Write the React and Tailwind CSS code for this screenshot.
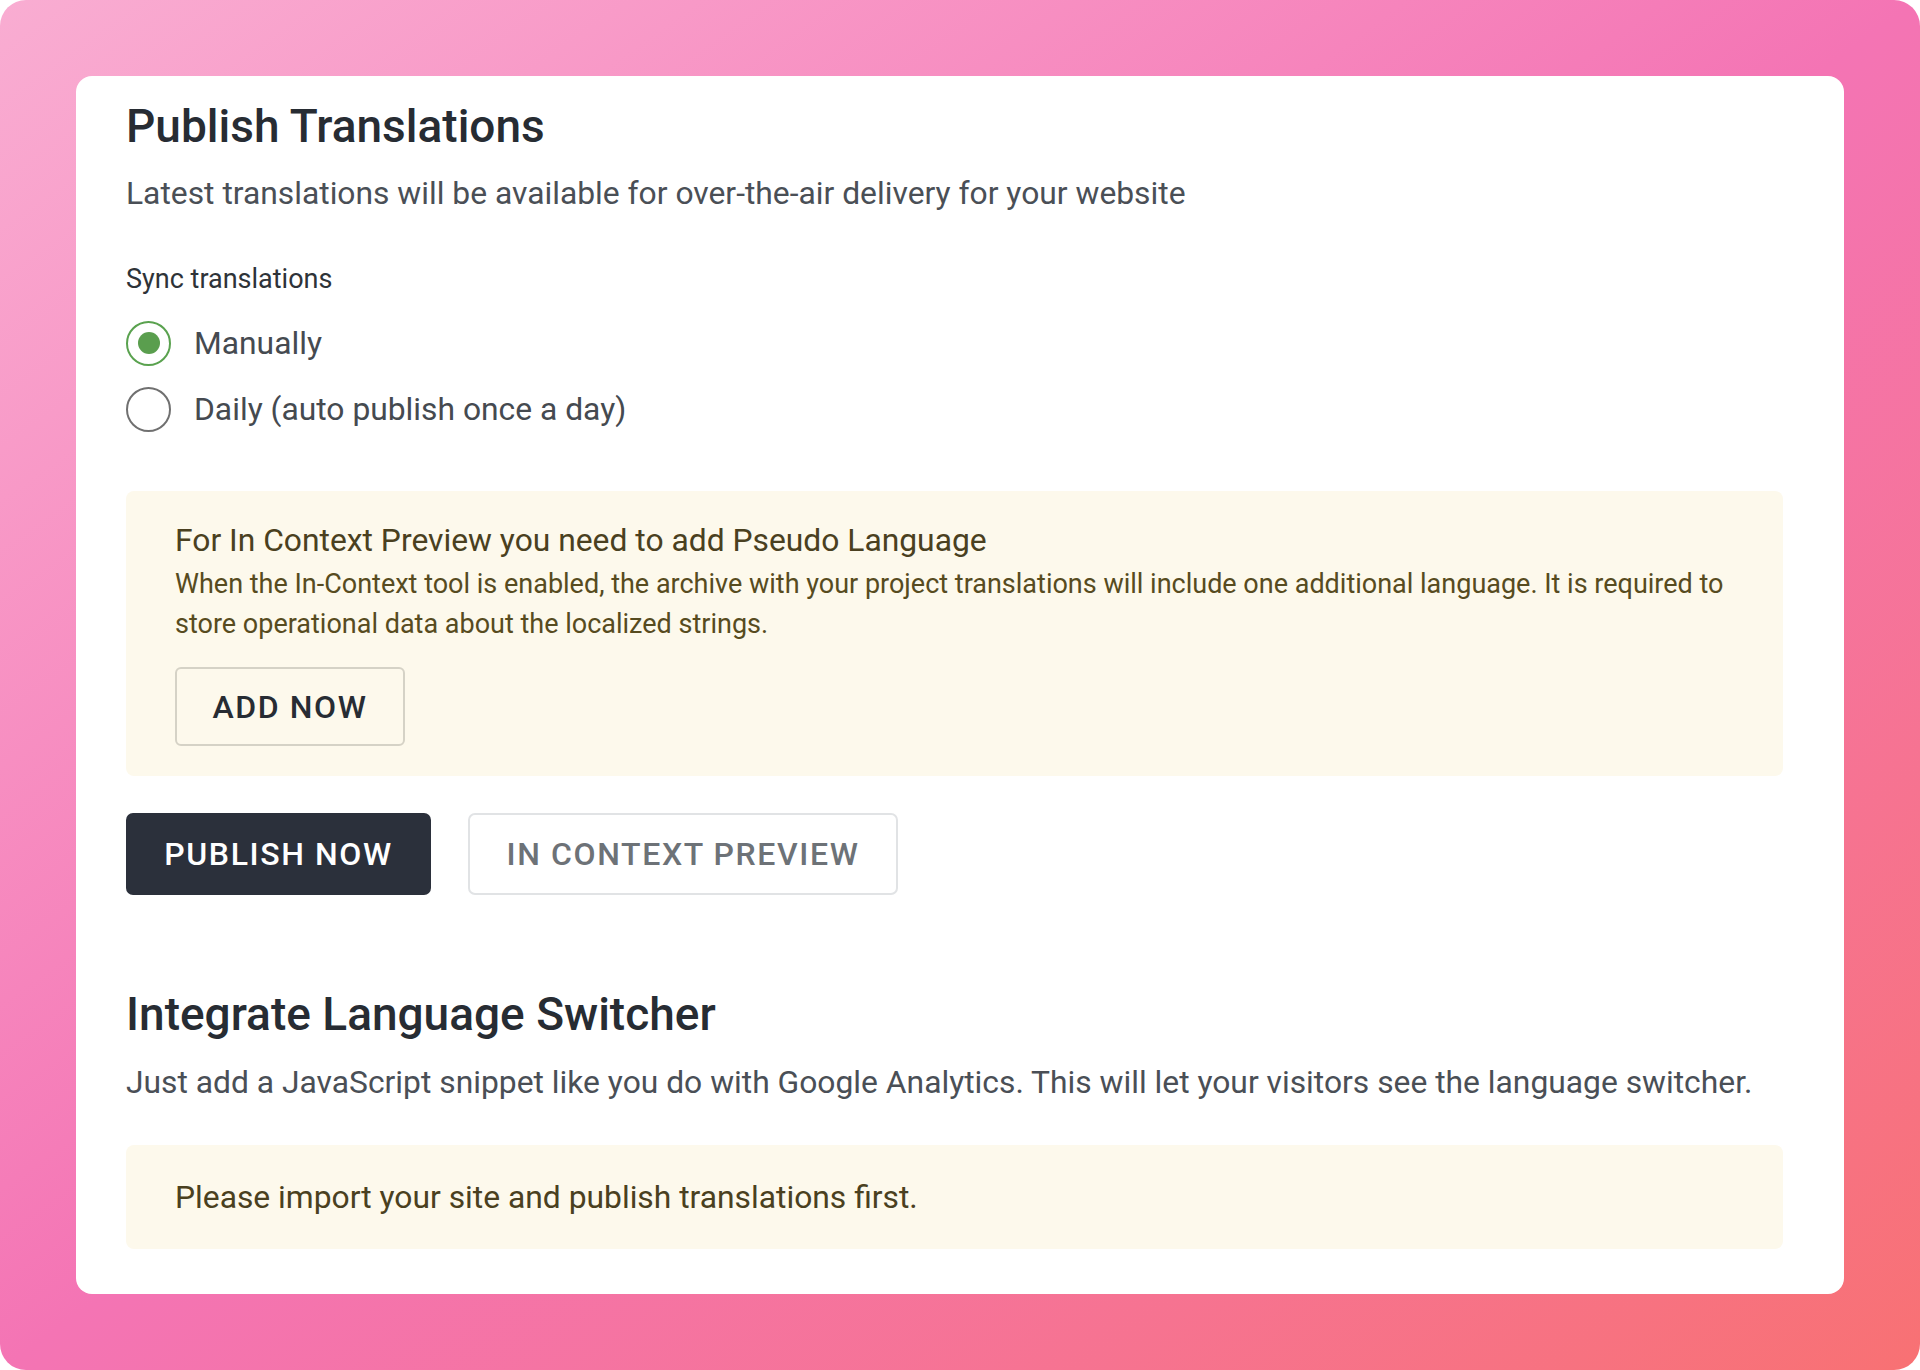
import React, { useState } from "react";

const font = { fontFamily: "Roboto, 'Noto Sans', sans-serif" };

function Radio({ checked, label, onClick }) {
  return (
    <div className="flex h-[56px] items-center cursor-pointer" onClick={onClick}>
      <span
        className={`flex h-[45px] w-[45px] items-center justify-center rounded-full border-2 ${
          checked ? "border-[#5aa24f]" : "border-[#707070]"
        }`}
      >
        {checked && <span className="h-[22px] w-[22px] rounded-full bg-[#5a9e4e]" />}
      </span>
      <span className="ml-[23px] text-[31.8px] leading-[40px] text-[#454a50]">{label}</span>
    </div>
  );
}

export default function App() {
  const [sync, setSync] = useState("manual");

  return (
    <div className="min-h-[1370px] w-full bg-white" style={font}>
      <div className="flex min-h-[1370px] w-full flex-col rounded-[26px] bg-linear-to-br from-[#f9add2] via-[#f474b4] to-[#f87173] px-[76px] pt-[76px]">
        <div className="w-full rounded-2xl bg-white pl-[50px] pr-[61px] pt-[22px] pb-[45px]">
          <h1 className="h-[56px] text-[46px] font-medium leading-[56px] text-[#272c33]">
            Publish Translations
          </h1>
          <p className="mt-[19px] text-[31.8px] leading-[40px] text-[#4a4f56]">
            Latest translations will be available for over-the-air delivery for your website
          </p>

          <div className="mt-[49px] text-[27px] leading-[34px] text-[#2e3338]">Sync translations</div>
          <div className="mt-[19px] flex flex-col gap-[10px]">
            <Radio checked={sync === "manual"} label="Manually" onClick={() => setSync("manual")} />
            <Radio
              checked={sync === "daily"}
              label="Daily (auto publish once a day)"
              onClick={() => setSync("daily")}
            />
          </div>

          <div className="mt-[54px] rounded-lg bg-[#fdf9ec] pl-[49px] pr-[20px] pt-[27px] pb-[30px]">
            <div className="text-[31.8px] leading-[44px] text-[#4a4020]">
              For In Context Preview you need to add Pseudo Language
            </div>
            <p className="mt-[2px] text-[27px] leading-[40px] text-[#574b20]">
              When the In-Context tool is enabled, the archive with your project translations will include one
              additional language. It is required to store operational data about the localized strings.
            </p>
            <button className="mt-[23px] h-[79px] w-[230px] rounded-[6px] border-2 border-[#d5d2c6] bg-transparent text-[32px] font-medium tracking-[0.05em] text-[#272c33]">
              ADD NOW
            </button>
          </div>

          <div className="mt-[37px] flex gap-[37px]">
            <button className="h-[82px] w-[305px] rounded-[7px] bg-[#2b303b] text-[32px] font-medium tracking-[0.05em] text-white">
              PUBLISH NOW
            </button>
            <button className="h-[82px] w-[430px] rounded-[7px] border-2 border-[#e1e3e5] bg-white text-[32px] font-medium tracking-[0.05em] text-[#6d7277]">
              IN CONTEXT PREVIEW
            </button>
          </div>

          <h2 className="mt-[91px] h-[56px] text-[46px] font-medium leading-[56px] text-[#272c33]">
            Integrate Language Switcher
          </h2>
          <p className="mt-[20px] text-[31.8px] leading-[40px] text-[#4a4f56]">
            Just add a JavaScript snippet like you do with Google Analytics. This will let your visitors see the
            language switcher.
          </p>

          <div className="mt-[43px] flex h-[104px] items-center rounded-lg bg-[#fdf9ec] pl-[49px]">
            <span className="text-[31.8px] leading-[40px] text-[#4a4020]">
              Please import your site and publish translations first.
            </span>
          </div>
        </div>
      </div>
    </div>
  );
}
